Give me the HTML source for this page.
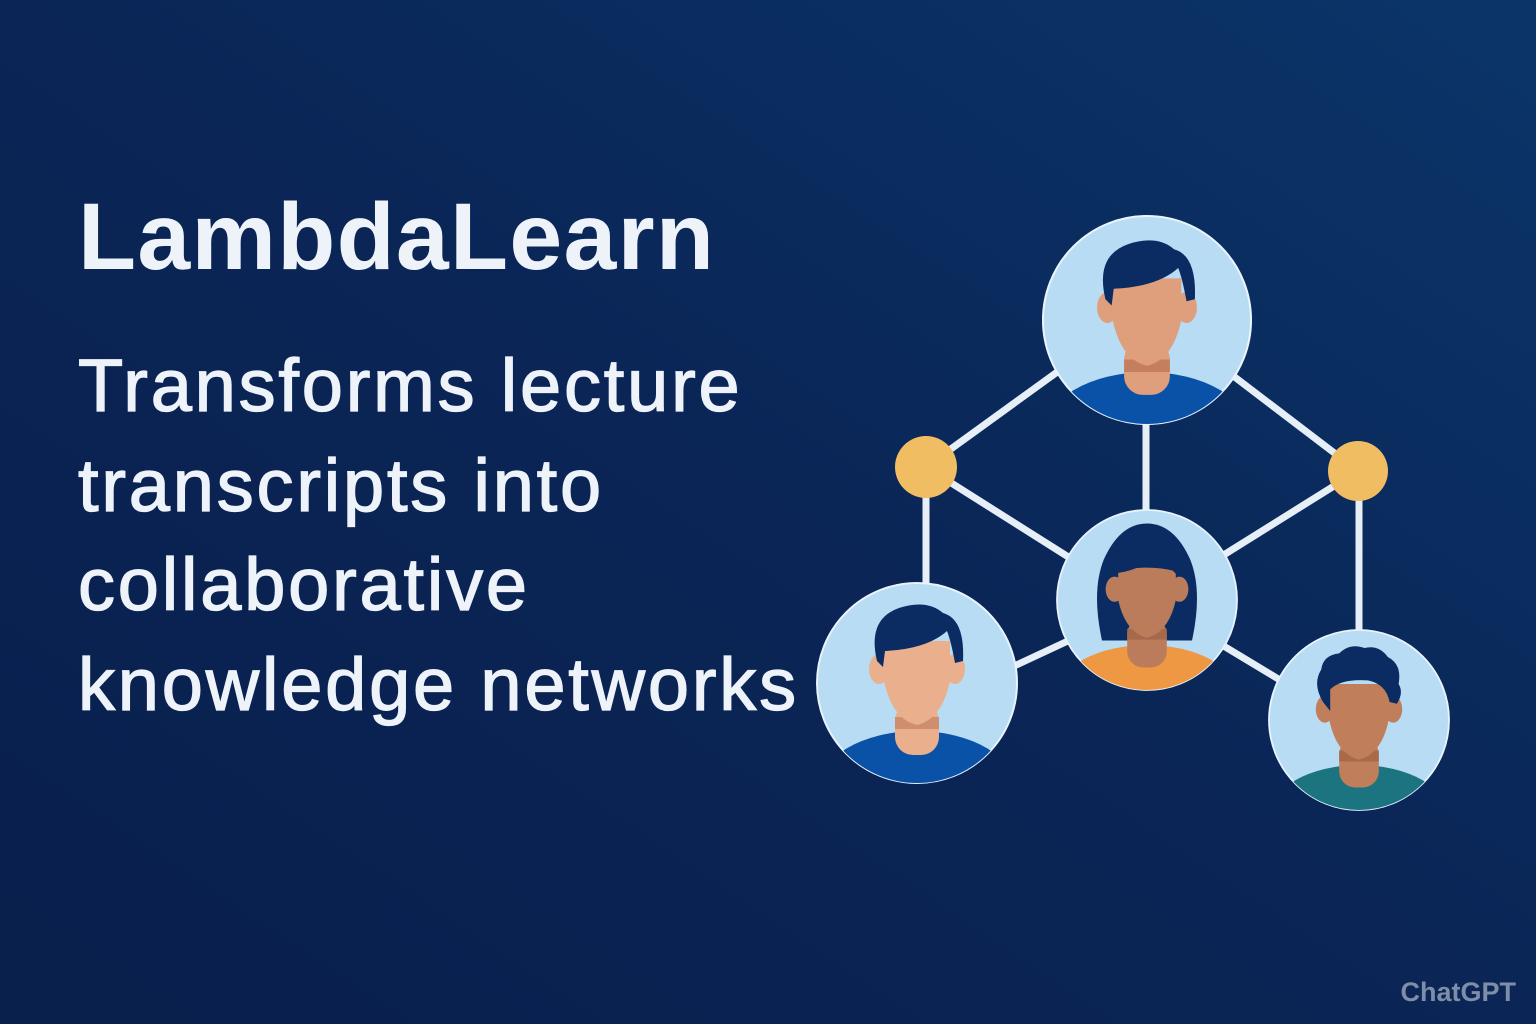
<!DOCTYPE html>
<html><head><meta charset="utf-8"><style>
html,body{margin:0;padding:0}
body{width:1536px;height:1024px;overflow:hidden;background:linear-gradient(to top right,#091f4c 0%,#0a2556 50%,#0b3569 100%);position:relative;font-family:"Liberation Sans",sans-serif;color:#eef3fa}
.t{position:absolute;left:78px;font-weight:bold;white-space:nowrap}
.h{top:183px;font-size:95px;letter-spacing:1.3px}
.s{font-size:74px;font-weight:normal;-webkit-text-stroke:1.3px #eef3fa;line-height:99.5px;top:336px;letter-spacing:2.8px}
.w{position:absolute;right:20px;bottom:16px;font-size:27px;font-weight:bold;color:#7d8ea6}
svg{position:absolute;left:0;top:0}
</style></head><body>
<div class="t h">LambdaLearn</div>
<div class="t s">Transforms lecture<br>transcripts into<br>collaborative<br>knowledge networks</div>
<div class="w">ChatGPT</div>
<svg width="1536" height="1024" viewBox="0 0 1536 1024">
<defs><clipPath id="c"><circle r="100"/></clipPath></defs>
<g stroke="#e6eef7" stroke-width="7" stroke-linecap="round">
<line x1="926" y1="467" x2="1060" y2="370"/>
<line x1="926" y1="467" x2="1070" y2="558"/>
<line x1="926" y1="467" x2="926" y2="590"/>
<line x1="1146" y1="420" x2="1146" y2="515"/>
<line x1="1232" y1="375" x2="1358" y2="471"/>
<line x1="1358" y1="471" x2="1222" y2="556"/>
<line x1="1359" y1="471" x2="1359" y2="632"/>
<line x1="1010" y1="668" x2="1070" y2="640"/>
<line x1="1222" y1="645" x2="1280" y2="680"/>
</g>
<circle cx="926" cy="467" r="31" fill="#f1bd62"/>
<circle cx="1358" cy="471" r="30" fill="#f1bd62"/>
<g transform="translate(1147,320) scale(1.04)">
<circle r="100" fill="#b7dcf4" stroke="#e8f3fc" stroke-width="2"/>
<g clip-path="url(#c)">
<ellipse cx="0" cy="110" rx="100" ry="60" fill="#0a52a8"/>
<rect x="-22" y="20" width="44" height="52" rx="18" fill="#df9f7c"/>
<rect x="-22" y="38" width="44" height="12" fill="#c47f5f"/>
<ellipse cx="-38" cy="-12" rx="10" ry="15" fill="#df9f7c"/>
<ellipse cx="38" cy="-12" rx="10" ry="15" fill="#df9f7c"/>
<path d="M-33,-40 L33,-40 L33,0 Q25,38 0,44 Q-25,38 -33,0 Z" fill="#df9f7c"/>
<path d="M-40,-20 Q-50,-62 -18,-73 Q10,-82 26,-68 Q48,-62 46,-20 L38,-18 Q34,-40 30,-50 Q10,-32 -32,-30 L-34,-14 Z" fill="#0a2c62"/>
</g></g>
<g transform="translate(1147,600) scale(0.9)">
<circle r="100" fill="#b7dcf4" stroke="#e8f3fc" stroke-width="2"/>
<g clip-path="url(#c)">
<path d="M-50,45 Q-62,-10 -48,-45 Q-30,-85 0,-85 Q30,-85 48,-45 Q62,-10 50,45 Z" fill="#0a2c62"/>
<ellipse cx="0" cy="105" rx="100" ry="55" fill="#ee9843"/>
<rect x="-22" y="20" width="44" height="55" rx="18" fill="#bb7c5b"/>
<rect x="-22" y="32" width="44" height="12" fill="#a5694c"/>
<ellipse cx="-36" cy="-12" rx="10" ry="14" fill="#bb7c5b"/>
<ellipse cx="36" cy="-12" rx="10" ry="14" fill="#bb7c5b"/>
<path d="M-32,-32 Q0,-40 32,-32 L32,0 Q24,36 0,42 Q-24,36 -32,0 Z" fill="#bb7c5b"/>
<path d="M-33,-30 Q5,-35 15,-65 Q22,-35 36,-26 L40,-50 Q0,-80 -38,-48 Z" fill="#0a2c62"/>
</g></g>
<g transform="translate(917,683) scale(1.0)">
<circle r="100" fill="#b7dcf4" stroke="#e8f3fc" stroke-width="2"/>
<g clip-path="url(#c)">
<ellipse cx="0" cy="108" rx="100" ry="60" fill="#0a52a8"/>
<rect x="-22" y="20" width="44" height="52" rx="18" fill="#eab08e"/>
<rect x="-22" y="34" width="44" height="12" fill="#cf8f6e"/>
<ellipse cx="-38" cy="-14" rx="10" ry="15" fill="#eab08e"/>
<ellipse cx="38" cy="-14" rx="10" ry="15" fill="#eab08e"/>
<path d="M-33,-42 L33,-42 L33,-2 Q25,36 0,42 Q-25,36 -33,-2 Z" fill="#eab08e"/>
<path d="M-40,-22 Q-50,-64 -18,-75 Q10,-84 26,-70 Q48,-64 46,-22 L38,-20 Q34,-42 30,-52 Q10,-34 -32,-32 L-34,-16 Z" fill="#0a2c62"/>
</g></g>
<g transform="translate(1359,720) scale(0.9)">
<circle r="100" fill="#b7dcf4" stroke="#e8f3fc" stroke-width="2"/>
<g clip-path="url(#c)">
<ellipse cx="0" cy="108" rx="100" ry="58" fill="#1b7480"/>
<rect x="-22" y="20" width="44" height="55" rx="18" fill="#c07e5a"/>
<rect x="-22" y="34" width="44" height="12" fill="#a86a4b"/>
<ellipse cx="-38" cy="-12" rx="10" ry="15" fill="#c07e5a"/>
<ellipse cx="38" cy="-12" rx="10" ry="15" fill="#c07e5a"/>
<path d="M-33,-40 L33,-40 L33,0 Q25,38 0,44 Q-25,38 -33,0 Z" fill="#c07e5a"/>
<path d="M-40,-20 Q-52,-40 -42,-56 Q-40,-72 -22,-74 Q-10,-86 6,-80 Q22,-84 32,-70 Q48,-62 44,-40 Q50,-30 42,-18 L34,-20 Q30,-40 10,-44 Q-20,-46 -32,-34 L-32,-10 Z" fill="#0a2c62"/>
</g></g>
</svg>
</body></html>
